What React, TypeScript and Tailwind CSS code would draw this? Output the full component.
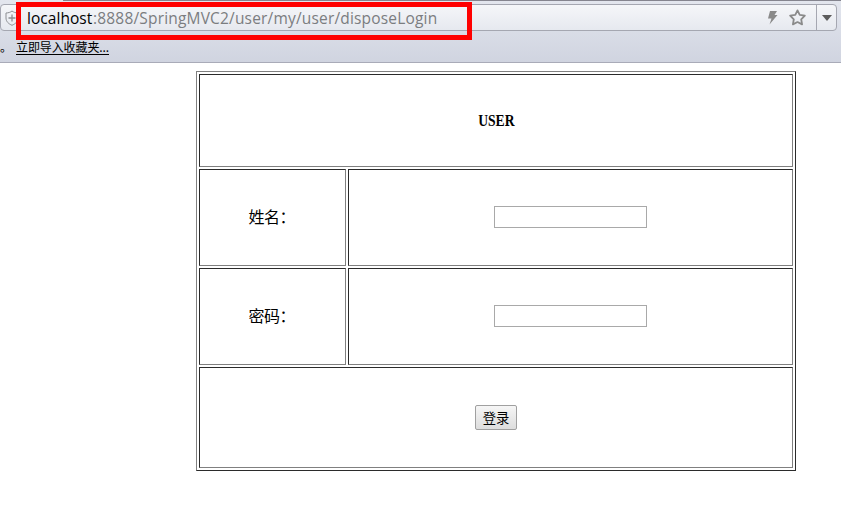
import type { ReactNode } from "react";

function Cell({ wide, children }: { wide?: boolean; children: ReactNode }) {
  return (
    <div
      className={`flex items-center justify-center border border-t-[#2b2b2b] border-l-[#2b2b2b] border-r-[#808080] border-b-[#808080] ${wide ? "col-span-2" : ""}`}
    >
      {children}
    </div>
  );
}

function Label({ text }: { text: string }) {
  return <span className="mb-[3px] w-[48px] tracking-[-0.5px] whitespace-nowrap">{text}：</span>;
}

function AddressBar() {
  return (
    <div className="mt-[3px] mr-1 flex h-[27px] items-center rounded border border-[#a5a7b1] bg-linear-to-b from-[#f5f6f9] to-[#e6e9ef]">
      <svg className="ml-[4px] h-[16px] w-[14px] shrink-0" viewBox="0 0 14 16" fill="none" stroke="#8b8d91">
        <path d="M7 1C5.4 2.3 3.4 2.9 1 3V8C1 11.5 3.5 13.8 7 15.3C10.5 13.8 13 11.5 13 8V3C10.6 2.9 8.6 2.3 7 1Z" />
        <path d="M7 4.5V11.5M3.5 8H10.5" strokeWidth="1.3" />
      </svg>
      <div className="ml-[8px] flex grow text-[15.5px] leading-[20px] whitespace-nowrap text-[#7b7d80]">
        <span className="w-[66px] tracking-[0.05px] text-black">localhost</span>
        <span className="tracking-[0.18px]">:8888/SpringMVC2/user/my/user/disposeLogin</span>
      </div>
      <svg className="mr-[11px] h-[14px] w-[11px] shrink-0" viewBox="0 0 11 14" fill="#8a8a8a">
        <path d="M3 0H10L7.5 4H10.5L2.5 13.5L4.5 7.5H1Z" />
      </svg>
      <svg className="mr-[10px] h-[17px] w-[17px] shrink-0" viewBox="0 0 16 16" fill="none" stroke="#8a8a8a" strokeWidth="1.7" strokeLinejoin="round">
        <path d="M8 1.3L10.1 5.6L14.9 6.3L11.5 9.7L12.3 14.5L8 12.3L3.7 14.5L4.5 9.7L1.1 6.3L5.9 5.6Z" />
      </svg>
      <div className="flex h-full w-[20px] shrink-0 items-center justify-center border-l border-[#a5a7b1]">
        <svg className="h-[6px] w-[10px]" viewBox="0 0 10 6" fill="#5c5c5c">
          <path d="M0 0H10L5 6Z" />
        </svg>
      </div>
    </div>
  );
}

export default function App() {
  return (
    <div className="relative h-[510px] w-[841px] overflow-hidden bg-white font-['Open_Sans','Noto_Sans_CJK_SC',sans-serif] text-black">
      <header className="h-[63px] border-b border-[#a9abb8] bg-linear-to-b from-[#e3e6ee] to-[#d0d4e0]">
        <div className="ml-[63px] h-px bg-[#85858f]" />
        <AddressBar />
        <div className="mt-[7px] flex h-[18px] items-center font-['Noto_Sans_CJK_SC',sans-serif] text-[12px] leading-[18px]">
          <span className="w-[16px]">。</span>
          <span className="tracking-[-0.1px] underline underline-offset-2">立即导入收藏夹...</span>
        </div>
      </header>
      <main className="flex pt-2 pl-[196px]">
        <div className="grid h-[400px] w-[600px] grid-cols-[147px_445px] grid-rows-[93px_97px_97px_101px] gap-[2px] border border-t-[#808080] border-l-[#808080] border-r-[#2b2b2b] border-b-[#2b2b2b] p-[2px] font-['Noto_Sans_CJK_SC',serif] text-[16px]">
          <Cell wide>
            <b className="scale-x-[0.85] font-['Liberation_Serif',serif] text-[16px]">USER</b>
          </Cell>
          <Cell>
            <Label text="姓名" />
          </Cell>
          <Cell>
            <input aria-label="姓名" className="mb-[2px] h-[22px] w-[153px] border border-[#a9a9a9] bg-white" />
          </Cell>
          <Cell>
            <Label text="密码" />
          </Cell>
          <Cell>
            <input aria-label="密码" type="password" className="mb-[2px] h-[22px] w-[153px] border border-[#a9a9a9] bg-white" />
          </Cell>
          <Cell wide>
            <button className="h-[25px] w-[42px] rounded-[2px] border border-[#a0a0a0] bg-linear-to-b from-[#f6f6f6] to-[#dddddd] font-['Noto_Sans_CJK_SC',sans-serif] text-[13.33px] leading-[22px]">
              登录
            </button>
          </Cell>
        </div>
      </main>
      <div className="absolute top-[2px] left-[16px] h-[38px] w-[456px] border-5 border-[#ff0000]" />
    </div>
  );
}
